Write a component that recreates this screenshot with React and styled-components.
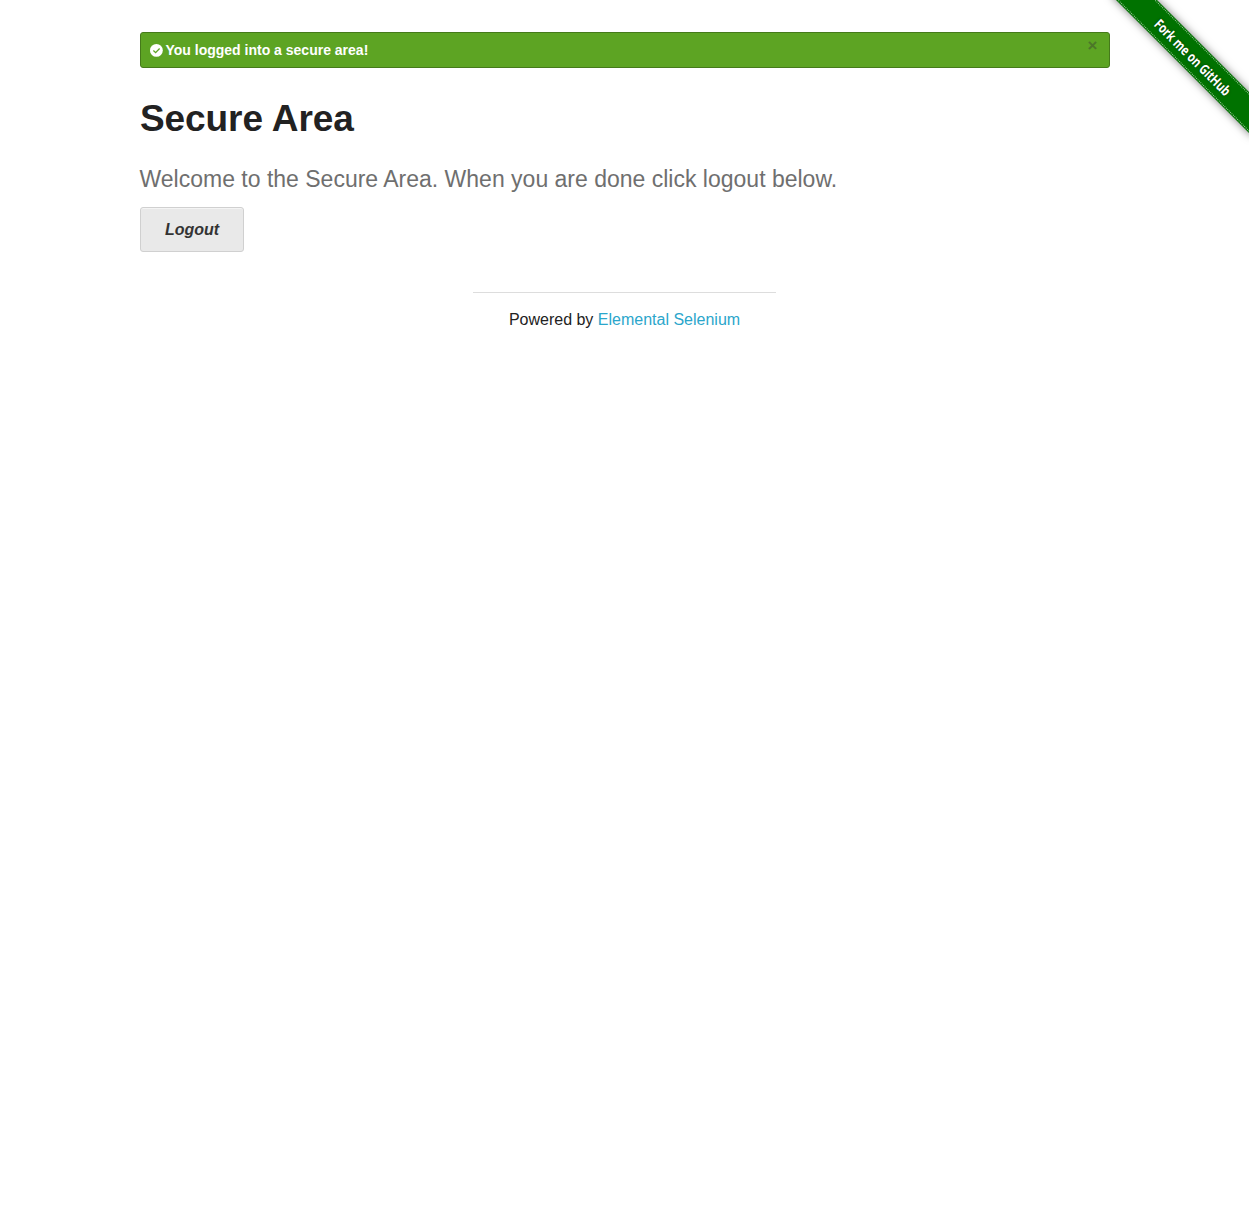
import React from "react";
import styled, { createGlobalStyle } from "styled-components";

const GlobalStyle = createGlobalStyle`
  *, *::before, *::after { box-sizing: border-box; }
  body {
    margin: 0;
    background: #fff;
    color: #222;
    font-family: "Liberation Sans", Arial, sans-serif;
    font-size: 16px;
    line-height: 1;
    overflow-x: hidden;
  }
`;

const Page = styled.main`
  width: 970px;
  margin: 0 auto;
  padding-top: 32px;
`;

const Alert = styled.div`
  display: flex;
  align-items: center;
  height: 36px;
  padding: 0 11px 0 9px;
  border: 1px solid #457a1a;
  border-radius: 3px;
  background: #5da423;
  color: #fff;
  font-size: 14px;
  font-weight: bold;
  line-height: 16px;
`;

const CheckIcon = styled.svg`
  width: 13px;
  height: 13px;
  margin-right: 3px;
  flex: none;
`;

const AlertText = styled.span`
  flex: 1;
`;

const Close = styled.a`
  align-self: flex-start;
  margin-top: 2px;
  color: #333;
  opacity: 0.4;
  font-size: 17px;
  line-height: 21px;
  cursor: pointer;
`;

const Title = styled.h2`
  margin: 25px 0 18px;
  padding-left: 0.5px;
  font-size: 37px;
  font-weight: bold;
  line-height: 52px;
  letter-spacing: -0.08px;
`;

const Subheader = styled.h4`
  margin: 0 0 12px;
  color: #6f6f6f;
  font-size: 23px;
  font-weight: normal;
  line-height: 32px;
`;

const Button = styled.a`
  display: inline-flex;
  align-items: center;
  justify-content: center;
  width: 104px;
  height: 45px;
  padding-left: 1px;
  border: 1px solid #d0d0d0;
  border-radius: 3px;
  background: #e9e9e9;
  box-shadow: inset 0 1px 0 rgba(255, 255, 255, 0.5);
  color: #333;
  font-size: 16px;
  font-style: italic;
  font-weight: bold;
  cursor: pointer;
`;

const Footer = styled.footer`
  width: 303px;
  margin: 40px auto 0;
  padding-top: 14px;
  border-top: 1px solid #ddd;
  text-align: center;
  line-height: 26px;
`;

const Link = styled.a`
  color: #2ba6cb;
  text-decoration: none;
`;

const Corner = styled.div`
  position: absolute;
  top: 0;
  right: 0;
  width: 149px;
  height: 149px;
  overflow: hidden;
`;

const Ribbon = styled.a`
  position: absolute;
  left: -8px;
  top: 41px;
  width: 200px;
  height: 29px;
  display: flex;
  align-items: center;
  justify-content: center;
  background: #007200;
  box-shadow: 0 0 8px rgba(0, 0, 0, 0.5);
  transform: rotate(45deg);

  &::before {
    content: "";
    position: absolute;
    inset: 1px 0;
    border: dotted rgba(255, 255, 255, 0.6);
    border-width: 1px 0;
  }
`;

const RibbonText = styled.span`
  color: #fff;
  font-family: "Open Sans", sans-serif;
  font-size: 14px;
  font-weight: 700;
  line-height: 20px;
  white-space: nowrap;
  text-shadow: 0 0 3px rgba(0, 0, 0, 0.5);
  transform: translate(2px, 0.5px) scaleX(0.77);
`;

export default function App() {
  return (
    <>
      <GlobalStyle />
      <Corner>
        <Ribbon>
          <RibbonText>Fork me on GitHub</RibbonText>
        </Ribbon>
      </Corner>
      <Page>
        <Alert>
          <CheckIcon viewBox="0 0 13 13">
            <circle cx="6.4" cy="6.4" r="6.4" fill="#fff" />
            <path d="M3.4 6.5 5.6 8.6 9.6 4.5" fill="none" stroke="#5da423" strokeWidth="1.3" />
          </CheckIcon>
          <AlertText>You logged into a secure area!</AlertText>
          <Close>×</Close>
        </Alert>
        <Title>Secure Area</Title>
        <Subheader>Welcome to the Secure Area. When you are done click logout below.</Subheader>
        <Button>Logout</Button>
        <Footer>
          Powered by <Link>Elemental Selenium</Link>
        </Footer>
      </Page>
    </>
  );
}
